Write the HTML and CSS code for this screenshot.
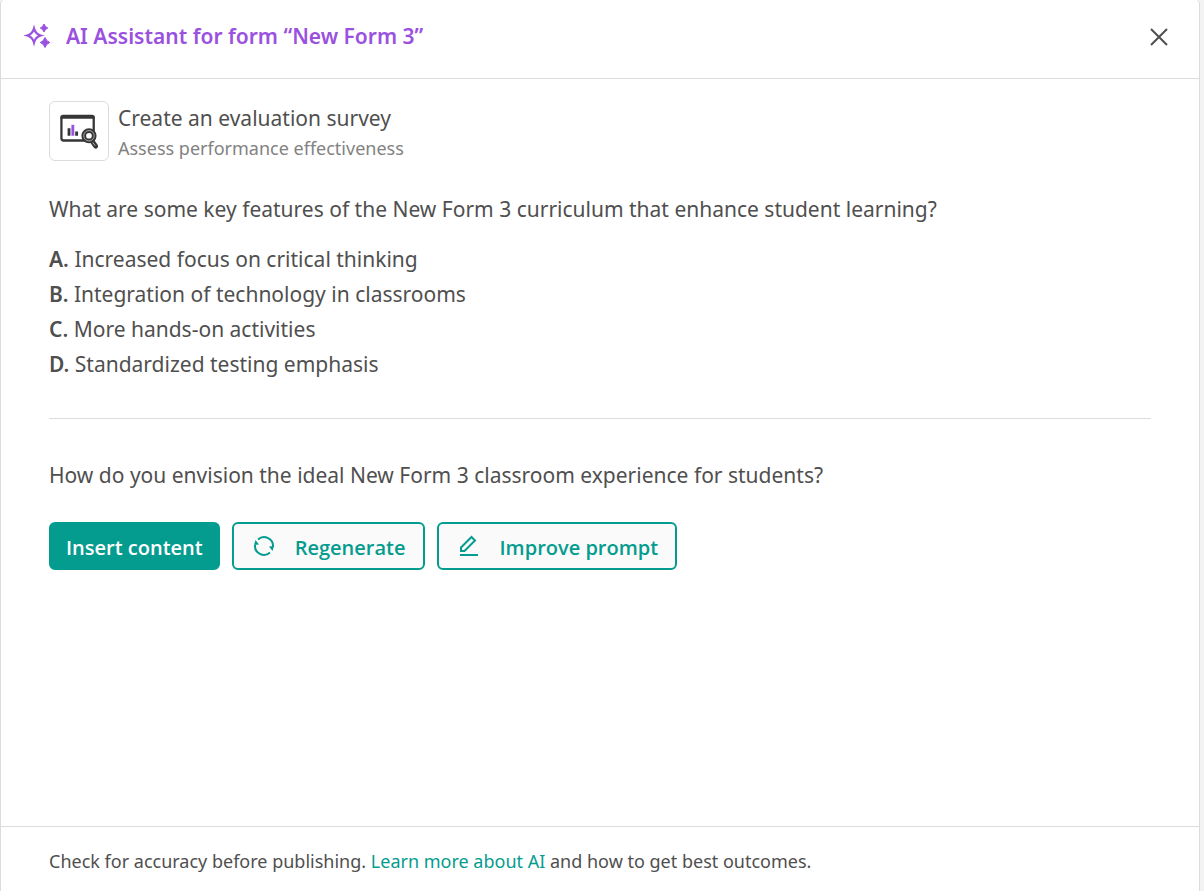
FILE: index.html
```html
<!DOCTYPE html>
<html lang="en">
<head>
<meta charset="utf-8">
<title>AI Assistant</title>
<link rel="stylesheet" href="styles.css">
</head>
<body>
<section class="dialog" role="dialog" aria-labelledby="dialog-title">
  <header class="dialog-header">
    <svg class="sparkles" viewBox="0 0 28 28" aria-hidden="true">
      <path d="M10 6.500Q11.500 12 16.700 13.500Q11.500 15 10 20.500Q8.500 15 3.300 13.500Q8.500 12 10 6.500Z" fill="none" stroke="currentColor" stroke-width="2.200"/>
      <path d="M20 2Q21 5 23.800 6Q21 7 20 10Q19 7 16.300 6Q19 5 20 2ZM21 15.500Q22.300 19.300 25.800 20.500Q22.300 21.700 21 25.500Q19.700 21.700 16.300 20.500Q19.700 19.300 21 15.500Z" fill="currentColor" stroke="currentColor" stroke-width="1"/>
    </svg>
    <h1 class="dialog-title" id="dialog-title">AI Assistant for form “New Form 3”</h1>
    <button class="close" type="button" aria-label="Close">
      <svg viewBox="0 0 20 20" aria-hidden="true"><path d="M2 2L18 18M18 2L2 18"/></svg>
    </button>
  </header>
  <main class="dialog-body">
    <div class="task">
      <div class="task-icon">
        <svg viewBox="0 0 40 38" fill="none" aria-hidden="true">
          <rect x="1.500" y="4" width="34" height="25" rx="2" stroke="#363636" stroke-width="2.400"/>
          <path d="M.3 6V5Q.3 2 3.300 2H33.700Q36.700 2 36.700 5V6Z" fill="#363636"/>
          <path d="M8 16H11V24H8ZM16 19.500H19V24H16Z" fill="#363636"/>
          <path d="M12 12.500H15V24H12Z" fill="#9b51e0"/>
          <path d="M34 30L37.500 35" stroke="#363636" stroke-width="5" stroke-linecap="round"/>
          <circle cx="30.500" cy="24" r="5.500" fill="#fff" stroke="#363636" stroke-width="5"/>
          <circle cx="30.500" cy="24" r="5.500" stroke="#aaa" stroke-width="1"/>
          <path d="M34.500 31L37 34.500" stroke="#bbb" stroke-width="1"/>
        </svg>
      </div>
      <div>
        <h2 class="task-title">Create an evaluation survey</h2>
        <p class="task-subtitle">Assess performance effectiveness</p>
      </div>
    </div>
    <p class="question">What are some key features of the New Form 3 curriculum that enhance student learning?</p>
    <ol class="answers">
      <li><b>A.</b> Increased focus on critical thinking</li>
      <li><b>B.</b> Integration of technology in classrooms</li>
      <li><b>C.</b> More hands-on activities</li>
      <li><b>D.</b> Standardized testing emphasis</li>
    </ol>
    <hr class="divider">
    <p class="question">How do you envision the ideal New Form 3 classroom experience for students?</p>
    <div class="actions">
      <button class="btn btn-primary" type="button">Insert content</button>
      <button class="btn" type="button">
        <svg viewBox="0 0 22 22" aria-hidden="true"><path d="M5 4.500A9 9 0 0 1 20 12M17 17.500A9 9 0 0 1 2 10"/><path class="solid" d="M2.500 5L6 9.500L1 10ZM16 11.500L21 11L19.500 16Z"/></svg>
        <span>Regenerate</span>
      </button>
      <button class="btn" type="button">
        <svg viewBox="0 0 22 22" aria-hidden="true"><path d="M2 20H20M3 16V12.500L13.500 2L17 5.500L6.500 16Z"/></svg>
        <span>Improve prompt</span>
      </button>
    </div>
  </main>
  <footer class="dialog-footer">
    <p>Check for accuracy before publishing. <a href="#learn">Learn more about AI</a> and how to get best outcomes.</p>
  </footer>
</section>
</body>
</html>
```
FILE: styles.css
```css
* {
  box-sizing: border-box;
}

body {
  margin: 0;
  padding-right: 4px;
  background: #f3f3f3;
  color: #4f4f4f;
  font-family: "Noto Sans", "Open Sans", sans-serif;
  font-size: 21px;
  line-height: 35px;
}

h1, h2, p, ol {
  margin: 0;
  padding: 0;
  font-size: inherit;
  font-weight: 400;
}

.dialog {
  display: flex;
  flex-direction: column;
  min-height: 100vh;
  border: solid #dcdcdc;
  border-width: 0 1px;
  border-radius: 4px 4px 0 0;
  background: #fff;
}

.dialog-header {
  display: flex;
  align-items: center;
  gap: 14px;
  padding: 18px 28px 24px 23px;
  border-bottom: 1px solid #dcdcdc;
  color: #9b51e0;
}

.sparkles {
  width: 28px;
  height: 28px;
}

.dialog-title {
  flex: 1;
  font-weight: 600;
  line-height: 36px;
}

.close {
  display: flex;
  padding: 3px 2px 1px;
  border: 0;
  background: none;
  color: #4f4f4f;
}

.close svg {
  width: 20px;
  height: 20px;
  fill: none;
  stroke: currentColor;
  stroke-width: 2;
}

.dialog-body {
  flex: 1;
  padding: 22px 48px;
}

.task {
  display: flex;
  gap: 9px;
  margin-bottom: 31px;
}

.task-icon {
  display: flex;
  width: 60px;
  height: 60px;
  padding: 10px;
  border: 1px solid #dcdcdc;
  border-radius: 6px;
}

.task-icon svg {
  width: 40px;
  height: 38px;
}

.task-title {
  line-height: 34px;
}

.task-subtitle {
  color: #828282;
  font-size: 18px;
  line-height: 26px;
}

.answers {
  margin: 15px 0 36px;
  list-style: none;
}

.answers b {
  font-weight: 600;
}

.divider {
  margin: 0 0 39px;
  border: 0;
  border-top: 1px solid #dcdcdc;
}

.actions {
  display: flex;
  flex-wrap: wrap;
  gap: 12px;
  margin-top: 29px;
}

.btn {
  display: flex;
  align-items: center;
  gap: 20px;
  height: 48px;
  padding: 2px 17px 0 19px;
  border: 2px solid #049c8f;
  border-radius: 6px;
  background: #fafafa;
  color: #049c8f;
  font-family: "Open Sans", "Noto Sans", sans-serif;
  font-size: 20px;
  font-weight: 600;
}

.btn-primary {
  padding: 2px 15px 0;
  background: #049c8f;
  color: #fff;
}

.btn svg {
  width: 22px;
  height: 22px;
  margin-bottom: 2px;
  fill: none;
  stroke: currentColor;
  stroke-width: 2;
}

.btn .solid {
  fill: currentColor;
  stroke: none;
}

.dialog-footer {
  padding: 17px 48px 12px;
  border-top: 1px solid #dcdcdc;
  font-size: 18px;
}

.dialog-footer a {
  color: #049c8f;
  text-decoration: none;
}
```
